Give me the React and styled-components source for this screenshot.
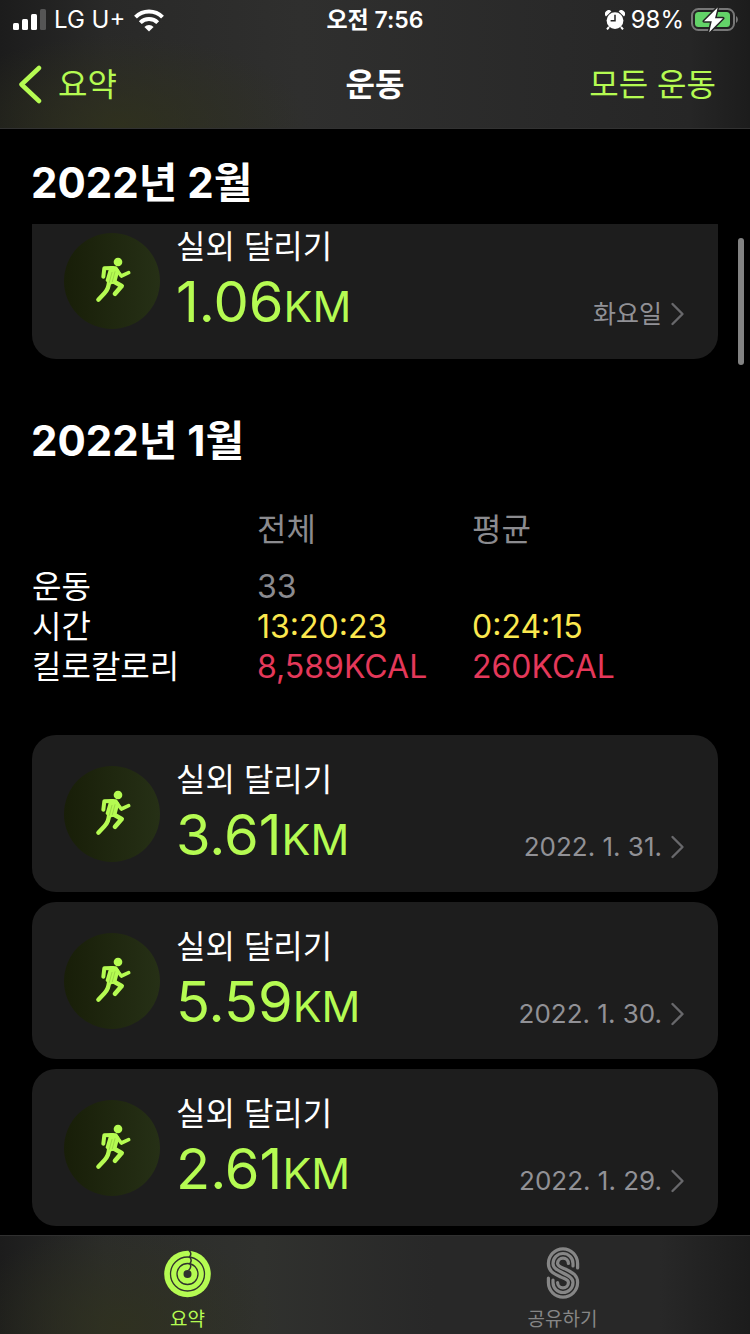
import React from 'react'
import styled, { createGlobalStyle } from 'styled-components'

const GlobalStyle = createGlobalStyle`
  * { box-sizing: border-box; }
  body {
    margin: 0;
    background: #000;
    color: #fff;
    font-family: Inter, "Noto Sans CJK KR", sans-serif;
  }
  h1, h2, h3, p { margin: 0; }
`

const lime = '#b5fb52'

const Page = styled.div`
  position: relative;
  display: flex;
  flex-direction: column;
  height: 100vh;
  overflow: hidden;
`

const TopBar = styled.header`
  flex: none;
  border-bottom: 1px solid #323232;
  background:
    radial-gradient(ellipse 190px 90px at 120px 125px, rgba(48, 50, 28, 0.8), transparent),
    linear-gradient(90deg, #1c1c1c, #292928 14%, #2f2f2e 40%, #292929 75%, #262626 92%, #1c1c1c);
`

const StatusBar = styled.div`
  display: grid;
  grid-template-columns: 1fr auto 1fr;
  align-items: center;
  height: 40px;
  padding: 0 12px;
  font-size: 24px;
  line-height: 40px;
`

const StatusGroup = styled.div`
  display: flex;
  align-items: center;
  justify-content: ${({ $end }) => ($end ? 'flex-end' : 'flex-start')};
  gap: ${({ $end }) => ($end ? '6px' : '8px')};
`

const Clock = styled.div`
  font-size: 23px;
  font-weight: 600;
`

const NavBar = styled.nav`
  display: grid;
  grid-template-columns: 1fr auto 1fr;
  align-items: center;
  height: 88px;
  padding: 2px 18px 0;
`

const NavTitle = styled.h1`
  font-size: 32px;
  line-height: 40px;
  font-weight: 600;
`

const NavLink = styled.a`
  display: flex;
  align-items: center;
  gap: 16px;
  justify-self: ${({ $end }) => ($end ? 'end' : 'start')};
  padding-right: ${({ $end }) => ($end ? '16px' : '0')};
  color: ${lime};
  font-size: 32px;
  line-height: 40px;
  text-decoration: none;
`

const Main = styled.main`
  flex: 1;
  min-height: 0;
  overflow: hidden;
`

const MonthTitle = styled.h2`
  height: 95px;
  padding: 24px 31px 0;
  font-size: 42px;
  line-height: 60px;
  font-weight: 700;
`

const MonthSection = styled.section`
  padding-top: ${({ $first }) => ($first ? '0' : '28px')};
`

const ScrolledRows = styled.div`
  overflow: hidden;

  & > ul {
    margin-top: -22px;
  }
`

const Summary = styled.table`
  width: calc(100% - 64px);
  margin: 28px 32px 48px;
  border-collapse: collapse;
  table-layout: fixed;
  font-size: 32px;
  line-height: 40px;

  th, td {
    padding: 0;
    font-weight: 400;
    text-align: left;
    white-space: nowrap;
  }
  thead th {
    padding-bottom: 17px;
    color: #8b8b8f;
  }
`

const LabelCol = styled.col`
  width: 225px;
`

const TotalCol = styled.col`
  width: 215px;
`

const Value = styled.td`
  color: ${({ $color }) => $color};
`

const List = styled.ul`
  display: flex;
  flex-direction: column;
  gap: 10px;
  margin: 0;
  padding: 0 32px;
  list-style: none;
`

const Card = styled.a`
  display: flex;
  align-items: flex-end;
  gap: 16px;
  height: 157px;
  padding: 25px 32px;
  border-radius: 24px;
  background: #1d1d1d;
  color: #fff;
  text-decoration: none;
`

const Badge = styled.span`
  flex: none;
  align-self: center;
  width: 96px;
  height: 96px;
  border-radius: 50%;
  background: linear-gradient(90deg, #181e08, #263016);

  svg { display: block; }
`

const Info = styled.div`
  flex: 1;
  align-self: flex-start;
`

const Name = styled.h3`
  font-size: 32px;
  line-height: 40px;
  font-weight: 400;
`

const Distance = styled.p`
  color: ${lime};
  font-size: 56px;
  line-height: 70px;
`

const Unit = styled.span`
  font-size: 43px;
`

const When = styled.span`
  display: flex;
  align-items: center;
  gap: 8px;
  color: #919196;
  font-size: ${({ $small }) => ($small ? '25px' : '26px')};
  line-height: 40px;
`

const ScrollThumb = styled.div`
  position: absolute;
  top: 238px;
  right: 6px;
  width: 6px;
  height: 127px;
  border-radius: 3px;
  background: #828282;
`

const TabBar = styled.nav`
  flex: none;
  display: grid;
  grid-template-columns: 1fr 1fr;
  height: 99px;
  border-top: 1px solid #303030;
  background:
    radial-gradient(ellipse 160px 100px at 120px 90px, rgba(48, 50, 30, 0.8), transparent),
    linear-gradient(90deg, #1c1c1c, #2b2c2a 14%, #30312e 35%, #282828 58%, #282828 88%, #1c1c1c);
`

const Tab = styled.a`
  display: flex;
  flex-direction: column;
  align-items: center;
  padding-top: 10px;
  gap: 6px;
  color: ${({ $active }) => ($active ? lime : '#868686')};
  font-size: 19px;
  line-height: 28px;
  text-decoration: none;
`

const SignalIcon = () => (
  <svg width="34" height="22" viewBox="0 0 34 22" fill="#fff" aria-hidden="true">
    <rect x="1" y="14" width="6" height="7" rx="1.5" />
    <rect x="10" y="10" width="6" height="11" rx="1.5" />
    <rect x="19" y="5" width="6" height="16" rx="1.5" />
    <rect x="28" y="0" width="6" height="21" rx="1.5" fill="#555" />
  </svg>
)

const WifiIcon = () => (
  <svg width="32" height="24" viewBox="0 0 32 24" fill="none" stroke="#fff" strokeWidth="4" aria-hidden="true">
    <path d="M2.5 9.2a19 19 0 0 1 27 0" />
    <path d="M7.3 14.6a12.3 12.3 0 0 1 17.400 0" />
    <path d="M16 23.500l-4.600-4.600a6.500 6.500 0 0 1 9.200 0z" fill="#fff" stroke="none" />
  </svg>
)

const AlarmIcon = () => (
  <svg width="20" height="20" viewBox="0 0 20 20" aria-hidden="true">
    <path d="M1 6.5a3.7 3.7 0 0 1 5.4-5.2zM19 6.5a3.7 3.7 0 0 0-5.4-5.2z" fill="#fff" />
    <path d="M4 17l-2 2.4M16 17l2 2.4" stroke="#fff" strokeWidth="2" />
    <circle cx="10" cy="10.6" r="8.4" fill="#fff" />
    <path d="M10 4.8v6H5.6" fill="none" stroke="#252525" strokeWidth="1.5" />
  </svg>
)

const BatteryIcon = () => (
  <svg width="48" height="26" viewBox="0 0 48 26" aria-hidden="true">
    <rect x="2" y="2" width="42" height="21" rx="6.5" fill="none" stroke="#777" strokeWidth="2" />
    <rect x="5" y="5" width="35" height="15" rx="3.5" fill="#63d368" />
    <path d="M46 9c2.500 1.400 2.500 5.600 0 7z" fill="#777" />
    <path d="M27.700 0.500L14 14.200h7.800l-2.600 11L33 11.200h-8z" fill="#fff" stroke="#242424" strokeWidth="3" paintOrder="stroke" strokeLinejoin="round" />
  </svg>
)

const BackIcon = () => (
  <svg width="24" height="40" viewBox="0 0 24 40" fill="none" stroke={lime} strokeWidth="4.500" strokeLinecap="round" strokeLinejoin="round" aria-hidden="true">
    <path d="M21 3L3.500 19.500 21 36" />
  </svg>
)

const ChevronIcon = () => (
  <svg width="16" height="24" viewBox="0 0 16 24" fill="none" stroke="#68686b" strokeWidth="2.400" strokeLinecap="round" strokeLinejoin="round" aria-hidden="true">
    <path d="M2.500 2l10 10-10 10" />
  </svg>
)

const RunnerIcon = () => (
  <svg width="96" height="96" viewBox="0 0 288 288" fill="none" stroke={lime} strokeLinecap="round" strokeLinejoin="round" aria-hidden="true">
    <circle cx="162" cy="87" r="13" fill={lime} stroke="none" />
    <path d="M118 131l3-25 26-1" strokeWidth="12" />
    <path d="M156 108l16 21 22-10" strokeWidth="11" />
    <path d="M140 104h16l6 9-9 34-15 4-9-9z" fill={lime} strokeWidth="8" />
    <path d="M136 144c-3 20-5 25-14 36l-19 20" strokeWidth="13" />
    <path d="M148 145l25 14-20 23" strokeWidth="14" />
    <path d="M144 118l-8 30M153 116l-8 30" stroke="#8ec440" strokeWidth="2" />
  </svg>
)

const RingsIcon = () => (
  <svg width="48" height="54" viewBox="0 0 48 54" fill="none" aria-hidden="true">
    <circle cx="23.500" cy="28" r="23.300" fill={lime} />
    <circle cx="23.500" cy="28" r="17" stroke="#30312e" strokeWidth="1.300" />
    <circle cx="23.500" cy="28" r="10.500" stroke="#30312e" strokeWidth="1.300" />
    <circle cx="23.500" cy="28" r="4" fill="#30312e" />
    <path d="M25 4.500c2.200 2 2.200 4.500 0.500 6.500c2 2 2 4.500 0.500 6.500c1.500 2.500 0.500 5-1.500 7" stroke="#30312e" strokeWidth="1.500" />
  </svg>
)

const SharingIcon = () => (
  <svg width="36" height="54" viewBox="0 0 36 54" fill="none" stroke="currentColor" strokeWidth="3.200" strokeLinecap="round" aria-hidden="true">
    <path d="M32.600 22V17.500A14.600 14.600 0 0 0 3.400 17.500C3.400 25 8 27.200 15.900 31.100C20 33.100 23.400 33.500 23.400 36.500A5.400 5.400 0 0 1 12.600 36.500" />
    <path d="M28 20V17.500A10 10 0 0 0 8 17.500C8 22 12 24 18 27C24 30 28 32 28 36.500A10 10 0 0 1 8 36.500V34" />
    <path d="M23.400 17.500A5.400 5.400 0 0 0 12.600 17.500C12.600 20.500 16 20.900 20.100 22.900C28 26.800 32.600 29 32.600 36.500A14.600 14.600 0 0 1 3.400 36.500V32" />
  </svg>
)

const Workout = ({ distance, date, weekday }) => (
  <li>
    <Card href="#workout">
      <Badge><RunnerIcon /></Badge>
      <Info>
        <Name>실외 달리기</Name>
        <Distance>{distance}<Unit>KM</Unit></Distance>
      </Info>
      <When $small={Boolean(weekday)}>{weekday || date}<ChevronIcon /></When>
    </Card>
  </li>
)

const january = [
  { distance: '3.61', date: '2022. 1. 31.' },
  { distance: '5.59', date: '2022. 1. 30.' },
  { distance: '2.61', date: '2022. 1. 29.' },
]

const App = () => {
  return (
    <Page>
      <GlobalStyle />
      <TopBar>
        <StatusBar>
          <StatusGroup><SignalIcon />LG U+<WifiIcon /></StatusGroup>
          <Clock>오전 7:56</Clock>
          <StatusGroup $end><AlarmIcon />98%<BatteryIcon /></StatusGroup>
        </StatusBar>
        <NavBar>
          <NavLink href="#summary"><BackIcon />요약</NavLink>
          <NavTitle>운동</NavTitle>
          <NavLink $end href="#all">모든 운동</NavLink>
        </NavBar>
      </TopBar>
      <Main>
        <MonthSection $first>
          <MonthTitle>2022년 2월</MonthTitle>
          <ScrolledRows>
            <List>
              <Workout distance="1.06" weekday="화요일" />
            </List>
          </ScrolledRows>
        </MonthSection>
        <MonthSection>
          <MonthTitle>2022년 1월</MonthTitle>
          <Summary>
            <colgroup><LabelCol /><TotalCol /><col /></colgroup>
            <thead>
              <tr><td /><th scope="col">전체</th><th scope="col">평균</th></tr>
            </thead>
            <tbody>
              <tr><th scope="row">운동</th><Value $color="#8b8b8f">33</Value><td /></tr>
              <tr><th scope="row">시간</th><Value $color="#fbe84e">13:20:23</Value><Value $color="#fbe84e">0:24:15</Value></tr>
              <tr><th scope="row">킬로칼로리</th><Value $color="#e4385a">8,589KCAL</Value><Value $color="#e4385a">260KCAL</Value></tr>
            </tbody>
          </Summary>
          <List>
            {january.map((w) => <Workout key={w.date} {...w} />)}
          </List>
        </MonthSection>
      </Main>
      <ScrollThumb />
      <TabBar>
        <Tab $active href="#summary"><RingsIcon />요약</Tab>
        <Tab href="#sharing"><SharingIcon />공유하기</Tab>
      </TabBar>
    </Page>
  )
}

export default App
